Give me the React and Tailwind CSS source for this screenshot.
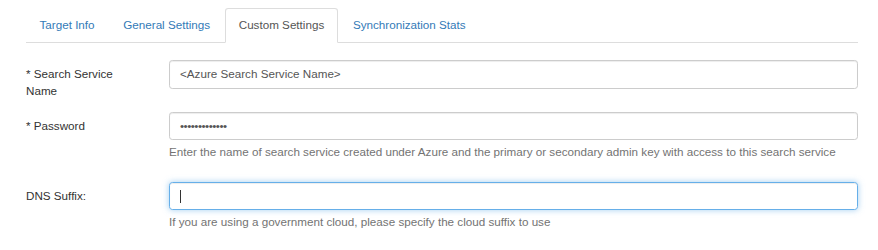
import React from 'react';

const tabs = ['Target Info', 'General Settings', 'Custom Settings', 'Synchronization Stats'];

const App = () => {
  const active = 'Custom Settings';

  return (
    <div className="w-[878px] h-[250px] bg-white pl-[26px] pr-[20px] pt-[8px] text-[11.67px] leading-[16.67px] text-[#333]" style={{ fontFamily: '"Liberation Sans", Arial, sans-serif' }}>
      {/* Tabs */}
      <ul className="flex border-b border-[#ddd]">
        {tabs.map((tab) => (
          <li key={tab} className="mr-[1.67px] -mb-px">
            {tab === active ? (
              <span className="block px-[12.5px] py-[8.33px] border border-[#ddd] border-b-transparent bg-white rounded-t-[3.3px] text-[#555]">
                {tab}
              </span>
            ) : (
              <span className="block px-[12.5px] py-[8.33px] border border-transparent text-[#337ab7]">
                {tab}
              </span>
            )}
          </li>
        ))}
      </ul>

      {/* Form */}
      <div className="mt-[17px]">
        <div className="flex mb-[12.5px]">
          <label className="w-[118px] shrink-0 pt-[5.8px] mr-[25px]">* Search Service Name</label>
          <div className="flex-1">
            <div className="h-[28.3px] px-[10px] flex items-center border border-[#ccc] rounded-[3.3px] shadow-[inset_0_1px_1px_rgba(0,0,0,0.075)] text-[#555]">
              &lt;Azure Search Service Name&gt;
            </div>
          </div>
        </div>

        <div className="flex mb-[12.5px]">
          <label className="w-[118px] shrink-0 pt-[5.8px] mr-[25px]">* Password</label>
          <div className="flex-1">
            <div className="h-[28.3px] px-[10px] flex items-center border border-[#ccc] rounded-[3.3px] shadow-[inset_0_1px_1px_rgba(0,0,0,0.075)] text-[#555] tracking-[-0.5px]">
              {'•••••••••••••'}
            </div>
            <p className="mt-[4.2px] mb-[8.3px] text-[#737373]">
              Enter the name of search service created under Azure and the primary or secondary admin key with access to this search service
            </p>
          </div>
        </div>

        <div className="flex">
          <label className="w-[118px] shrink-0 pt-[5.8px] mr-[25px]">DNS Suffix:</label>
          <div className="flex-1">
            <div className="h-[28.3px] px-[10px] flex items-center border border-[#66afe9] rounded-[3.3px] shadow-[inset_0_1px_1px_rgba(0,0,0,0.075),0_0_6px_rgba(102,175,233,0.6)]">
              <span className="block w-px h-[13px] bg-[#333]"></span>
            </div>
            <p className="mt-[4.2px] text-[#737373]">
              If you are using a government cloud, please specify the cloud suffix to use
            </p>
          </div>
        </div>
      </div>
    </div>
  );
};

export default App;
